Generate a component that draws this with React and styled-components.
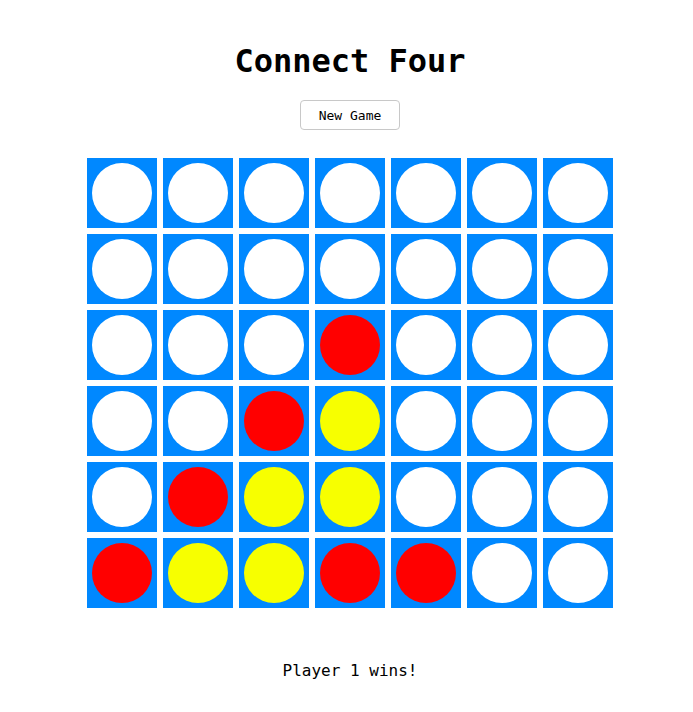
import React, { useState } from "react";
import styled, { createGlobalStyle } from "styled-components";

const GlobalStyle = createGlobalStyle`
  body {
    margin: 0;
    background: #ffffff;
    font-family: "DejaVu Sans Mono", monospace;
    color: #000000;
  }
`;

const COLORS = {
  0: "#ffffff",
  1: "#ff0000",
  2: "#f7ff00",
};

const initialBoard = [
  [0, 0, 0, 0, 0, 0, 0],
  [0, 0, 0, 0, 0, 0, 0],
  [0, 0, 0, 1, 0, 0, 0],
  [0, 0, 1, 2, 0, 0, 0],
  [0, 1, 2, 2, 0, 0, 0],
  [1, 2, 2, 1, 1, 0, 0],
];

const App = () => {
  const [board, setBoard] = useState(initialBoard);

  const reset = () => setBoard(initialBoard.map((row) => row.map(() => 0)));

  return (
    <Wrapper>
      <GlobalStyle />
      <Title>Connect Four</Title>
      <NewGameButton onClick={reset}>New Game</NewGameButton>
      <Board>
        {board.map((row, r) =>
          row.map((cell, c) => (
            <Cell key={`${r}-${c}`}>
              <Disc $color={COLORS[cell]} />
            </Cell>
          ))
        )}
      </Board>
      <Status>Player 1 wins!</Status>
    </Wrapper>
  );
};

const Wrapper = styled.div`
  display: flex;
  flex-direction: column;
  align-items: center;
  padding: 43px 0 0 7px;
`;

const Title = styled.h1`
  margin: 0;
  font-size: 32px;
  line-height: 37px;
  font-weight: bold;
`;

const NewGameButton = styled.button`
  margin-top: 20px;
  width: 100px;
  height: 30px;
  font-family: "DejaVu Sans Mono", monospace;
  font-size: 13px;
  color: #000000;
  background: #ffffff;
  border: 1px solid #c8c8c8;
  border-radius: 4px;
  cursor: pointer;
`;

const Board = styled.div`
  margin-top: 28px;
  display: grid;
  grid-template-columns: repeat(7, 70px);
  grid-auto-rows: 70px;
  gap: 6px;
`;

const Cell = styled.div`
  background: #0088ff;
  display: flex;
  align-items: center;
  justify-content: center;
`;

const Disc = styled.div`
  width: 60px;
  height: 60px;
  border-radius: 50%;
  background: ${(p) => p.$color};
`;

const Status = styled.p`
  margin: 53px 0 0;
  font-size: 16px;
  line-height: 19px;
`;

export default App;
